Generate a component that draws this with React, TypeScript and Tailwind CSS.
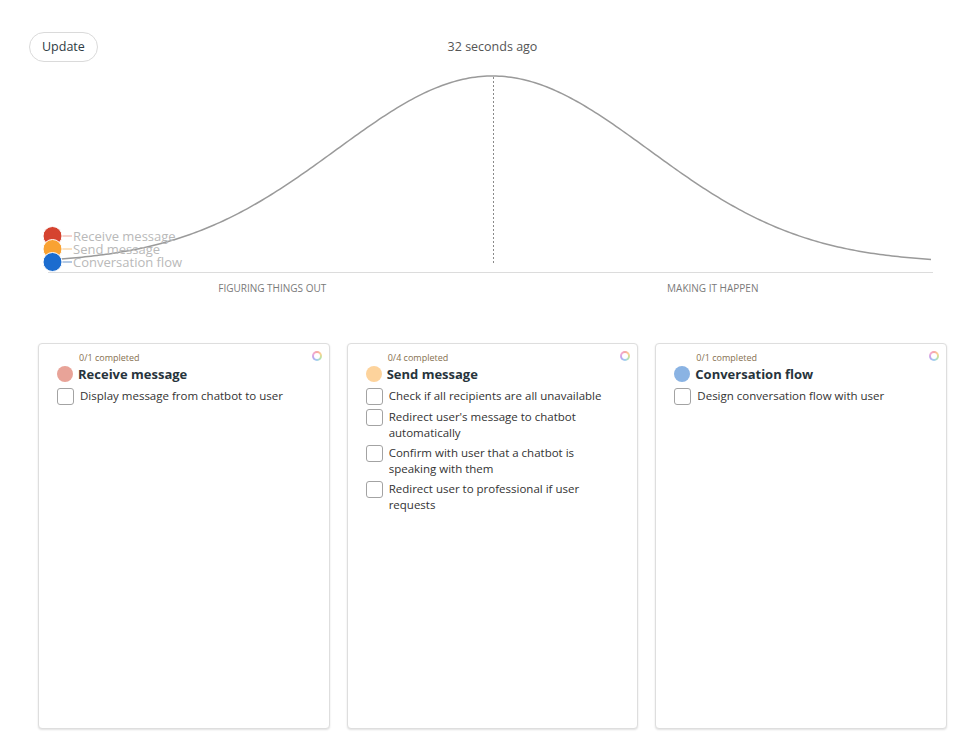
import React from "react"

type Scope = {
  name: string
  done: number
  total: number
  dot: string
  chip: string
  line: string
  tasks: string[]
}

const scopes: Scope[] = [
  {
    name: "Receive message",
    done: 0,
    total: 1,
    dot: "bg-[#e8a398]",
    chip: "#d5432f",
    line: "#f3c4bc",
    tasks: ["Display message from chatbot to user"],
  },
  {
    name: "Send message",
    done: 0,
    total: 4,
    dot: "bg-[#fdd39c]",
    chip: "#f9a232",
    line: "#fbd8ab",
    tasks: [
      "Check if all recipients are all unavailable",
      "Redirect user's message to chatbot automatically",
      "Confirm with user that a chatbot is speaking with them",
      "Redirect user to professional if user requests",
    ],
  },
  {
    name: "Conversation flow",
    done: 0,
    total: 1,
    dot: "bg-[#8ab3e3]",
    chip: "#1b6ccf",
    line: "#9bb8dd",
    tasks: ["Design conversation flow with user"],
  },
]

// hill curve, drawn in page coords (x 52 -> 933)
const hillPath = () => {
  const pts: string[] = []
  const left = 52
  const right = 933
  const mid = 492.5
  const base = 263
  const amp = 187
  const sigma = 156
  for (let x = left; x <= right; x += 3) {
    const y = base - amp * Math.exp(-((x - mid) ** 2) / (2 * sigma * sigma))
    pts.push(`${pts.length ? "L" : "M"}${x.toFixed(1)},${y.toFixed(2)}`)
  }
  return pts.join(" ")
}

const HillChart: React.FC = () => {
  const dots = [
    { y: 236, s: scopes[0] },
    { y: 249, s: scopes[1] },
    { y: 262, s: scopes[2] },
  ]
  return (
    <svg width={971} height={212} viewBox="0 64 971 212" className="block">
      <line x1={48} y1={272.5} x2={933} y2={272.5} stroke="#dcdcdc" strokeWidth={1} />
      <line
        x1={493.5}
        y1={77}
        x2={493.5}
        y2={263}
        stroke="#8a8a8a"
        strokeWidth={1}
        strokeDasharray="2 2"
      />
      {dots.map((d) => (
        <line key={d.s.name + "l"} x1={60} y1={d.y} x2={72} y2={d.y} stroke={d.s.line} strokeWidth={1.5} />
      ))}
      <path d={hillPath()} fill="none" stroke="#9a9a9a" strokeWidth={1.5} />
      {dots.map((d) => (
        <g key={d.s.name}>
          <circle cx={52.5} cy={d.y} r={9.5} fill={d.s.chip} stroke="#fff" strokeWidth={1} />
          <text
            x={73}
            y={d.y + 4.5}
            fontSize={13}
            fill="#b9b9b9"
            style={{ fontFamily: '"Open Sans", sans-serif' }}
          >
            {d.s.name}
          </text>
        </g>
      ))}
    </svg>
  )
}

const Ring: React.FC = () => (
  <div className="w-[10px] h-[10px] rounded-full p-[2px] bg-[conic-gradient(#f6a5a5,#fcd391,#b7e4a8,#9fd0f0,#b7a8f0,#f0a8d8,#f6a5a5)]">
    <div className="w-full h-full rounded-full bg-white" />
  </div>
)

const Card: React.FC<{ scope: Scope }> = ({ scope }) => (
  <div className="relative h-[386px] rounded-[4px] border border-[#dedede] bg-white shadow-[0_1px_2px_rgba(0,0,0,0.12)] pl-[18px] pr-3 pt-[8px]">
    <div className="absolute right-[7px] top-[7px]">
      <Ring />
    </div>
    <div className="pl-[22px] text-[9px] leading-[12px] text-[#86704f]">
      {scope.done}/{scope.total} completed
    </div>
    <div className="flex items-center gap-[5px]">
      <span className={`w-[16px] h-[16px] rounded-full ${scope.dot}`} />
      <span className="text-[13px] font-bold text-[#27343c] leading-[20px]">{scope.name}</span>
    </div>
    <ul className="mt-[4px] flex flex-col gap-[4px]">
      {scope.tasks.map((t) => (
        <li key={t} className="flex items-start gap-[6px]">
          <span className="shrink-0 w-[17px] h-[17px] rounded-[3px] border border-[#a3a3a3] bg-white" />
          <span className="text-[11.5px] leading-[16px] text-[#333] pr-[5px]">{t}</span>
        </li>
      ))}
    </ul>
  </div>
)

export default function App() {
  return (
    <div className="w-[971px] h-[748px] bg-white font-['Open_Sans',sans-serif] overflow-hidden">
      <div className="ml-[29px] w-[927px] pt-[32px] grid grid-cols-[1fr_auto_1fr] items-center">
        <div>
          <button className="h-[30px] px-[12px] rounded-full border border-[#dadada] bg-white text-[12.5px] text-[#2e3b44]">
            Update
          </button>
        </div>
        <div className="text-[12.5px] text-[#555] mt-[1px]">32 seconds ago</div>
        <div />
      </div>
      <div className="mt-[2px]">
        <HillChart />
      </div>
      <div className="ml-[52px] w-[881px] grid grid-cols-2 text-[10px] uppercase text-[#7a7a7a] mt-[6px] leading-[12px]">
        <div className="text-center">Figuring things out</div>
        <div className="text-center">Making it happen</div>
      </div>
      <div className="ml-[38px] w-[909px] mt-[49px] grid grid-cols-3 gap-[17px]">
        {scopes.map((s) => (
          <Card key={s.name} scope={s} />
        ))}
      </div>
    </div>
  )
}
